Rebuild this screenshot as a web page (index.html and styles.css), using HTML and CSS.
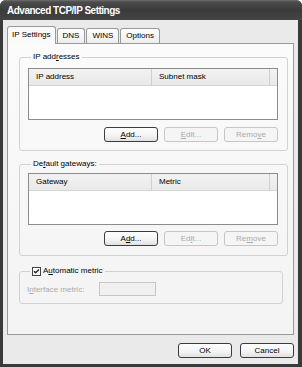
FILE: index.html
```html
<!DOCTYPE html>
<html>
<head>
    <meta charset="utf-8" />
    <title>Advanced TCP/IP Settings</title>
    <link rel="stylesheet" href="styles.css">
</head>
<body>
    <div class="window">
        <div class="titlebar">Advanced TCP/IP Settings</div>
        <div class="client">
            <div class="tabs">
                <div class="tab active">IP Settings</div>
                <div class="tab">DNS</div>
                <div class="tab">WINS</div>
                <div class="tab">Options</div>
            </div>
            <div class="panel">
                <fieldset class="group group-ip">
                    <legend>IP add<span class="u">r</span>esses</legend>
                    <div class="list">
                        <div class="list-head">
                            <div class="col col-a">IP address</div>
                            <div class="col col-b">Subnet mask</div>
                            <div class="col col-c"></div>
                        </div>
                    </div>
                    <div class="btn-row">
                        <button class="btn"><span class="u">A</span>dd...</button>
                        <button class="btn" disabled><span class="u">E</span>dit...</button>
                        <button class="btn" disabled>Remo<span class="u">v</span>e</button>
                    </div>
                </fieldset>
                <fieldset class="group group-gw">
                    <legend>De<span class="u">f</span>ault gateways:</legend>
                    <div class="list">
                        <div class="list-head">
                            <div class="col col-a">Gateway</div>
                            <div class="col col-b">Metric</div>
                            <div class="col col-c"></div>
                        </div>
                    </div>
                    <div class="btn-row">
                        <button class="btn">A<span class="u">d</span>d...</button>
                        <button class="btn" disabled>Ed<span class="u">i</span>t...</button>
                        <button class="btn" disabled>Re<span class="u">m</span>ove</button>
                    </div>
                </fieldset>
                <fieldset class="group group-metric">
                    <legend>
                        <span class="check">
                            <svg width="9" height="9" viewBox="0 0 9 9">
                                <path d="M2 4.2 L3.6 5.8 L7 2.4" fill="none" stroke="#2a2a2a" stroke-width="1.4" />
                            </svg>
                        </span>
                        A<span class="u">u</span>tomatic metric
                    </legend>
                    <div class="metric-row">
                        <span class="disabled-text">I<span class="u">n</span>terface metric:</span>
                        <span class="textbox"></span>
                    </div>
                </fieldset>
            </div>
            <div class="footer">
                <button class="btn">OK</button>
                <button class="btn">Cancel</button>
            </div>
        </div>
    </div>
</body>
</html>
```

FILE: styles.css
```css
html, body {
    margin: 0;
    background-color: #ffffff;
    font-family: 'Liberation Sans', Arial, sans-serif;
    font-size: 8px;
    color: #000;
}

.window {
    width: 302px;
    height: 367px;
    display: flex;
    flex-direction: column;
    background-color: #3a3a3a;
    border-radius: 6px 6px 0 0;
    overflow: hidden;
}

.titlebar {
    height: 20px;
    flex: none;
    box-sizing: border-box;
    padding-left: 7px;
    padding-top: 1px;
    display: flex;
    align-items: center;
    background: linear-gradient(#707070 0, #4c4c4c 2px, #3b3b3b 50%, #444 100%);
    color: #fff;
    font-weight: bold;
    font-size: 10px;
    letter-spacing: -0.5px;
}

.client {
    flex: 1;
    margin: 0 4px 3px 3px;
    padding-top: 6px;
    background-color: #ebeaea;
    display: flex;
    flex-direction: column;
}

.tabs {
    display: flex;
    align-items: flex-end;
    height: 17px;
    padding-left: 4px;
}

.tab {
    height: 15px;
    box-sizing: border-box;
    padding: 0 5px;
    margin-left: 1px;
    border: 1px solid #9a9a9a;
    border-bottom: none;
    border-radius: 3px 3px 0 0;
    background: linear-gradient(#ffffff, #ededed);
    line-height: 14px;
}

.tab.active {
    height: 18px;
    margin-left: 0;
    margin-bottom: -1px;
    padding: 0 4px;
    background: #fafafa;
    position: relative;
    z-index: 1;
    line-height: 16px;
}

.panel {
    height: 292px;
    flex: none;
    box-sizing: border-box;
    margin: 0 4px;
    border: 1px solid #9a9a9a;
    background: linear-gradient(#fbfbfb, #f3f3f3);
    padding: 0 10px 0 11px;
}

.group {
    margin: 0;
    padding: 6px 9px 8px 8px;
    border: 1px solid #d2d2d2;
    border-radius: 3px;
}

.group-ip {
    margin-top: 8px;
}

.group-gw {
    margin-top: 8px;
    padding-top: 4px;
    padding-bottom: 9px;
}

.group legend {
    padding: 0 2px;
    margin-left: 3px;
    line-height: 10px;
    display: flex;
    align-items: center;
}

.u {
    text-decoration: underline;
}

.list {
    height: 52px;
    box-sizing: border-box;
    border: 1px solid #8c8c8c;
    background-color: #fff;
}

.list-head {
    height: 16px;
    display: flex;
    background: linear-gradient(#f2f2f2, #e9e9e9);
    border-bottom: 1px solid #d4d4d4;
}

.col {
    box-sizing: border-box;
    padding-left: 7px;
    line-height: 16px;
    border-right: 1px solid #cfcfcf;
}

.col-a {
    width: 123px;
}

.col-b {
    width: 118px;
}

.col-c {
    flex: 1;
    border-right: none;
}

.btn-row {
    display: flex;
    justify-content: flex-end;
    gap: 6px;
    margin-top: 6px;
}

.group-ip .btn-row {
    margin-top: 7px;
}

.btn {
    width: 54px;
    height: 15px;
    box-sizing: border-box;
    padding: 0;
    border: 1px solid #3c3c3c;
    border-radius: 3px;
    background: linear-gradient(#ffffff, #f3f3f3 60%, #e0e0e0);
    font-family: inherit;
    font-size: 8px;
    color: #000;
}

.btn:disabled {
    border-color: #c6c6c6;
    background: #f5f5f5;
    color: #aaaaaa;
}

.group-metric {
    margin-top: 10px;
    padding: 6px 9px 7px 7px;
}

.check {
    width: 9px;
    height: 9px;
    box-sizing: border-box;
    border: 1px solid #444;
    background-color: #fff;
    margin-right: 2px;
    display: inline-flex;
}

.check svg {
    margin: -1px;
}

.metric-row {
    display: flex;
    align-items: center;
    gap: 10px;
}

.disabled-text {
    color: #aaaaaa;
    width: 62px;
}

.textbox {
    width: 57px;
    height: 14px;
    box-sizing: border-box;
    border: 1px solid #c6c6c6;
    background-color: #f0f0f0;
}

.footer {
    display: flex;
    justify-content: flex-end;
    gap: 8px;
    margin-top: 8px;
    padding-right: 4px;
}
```
